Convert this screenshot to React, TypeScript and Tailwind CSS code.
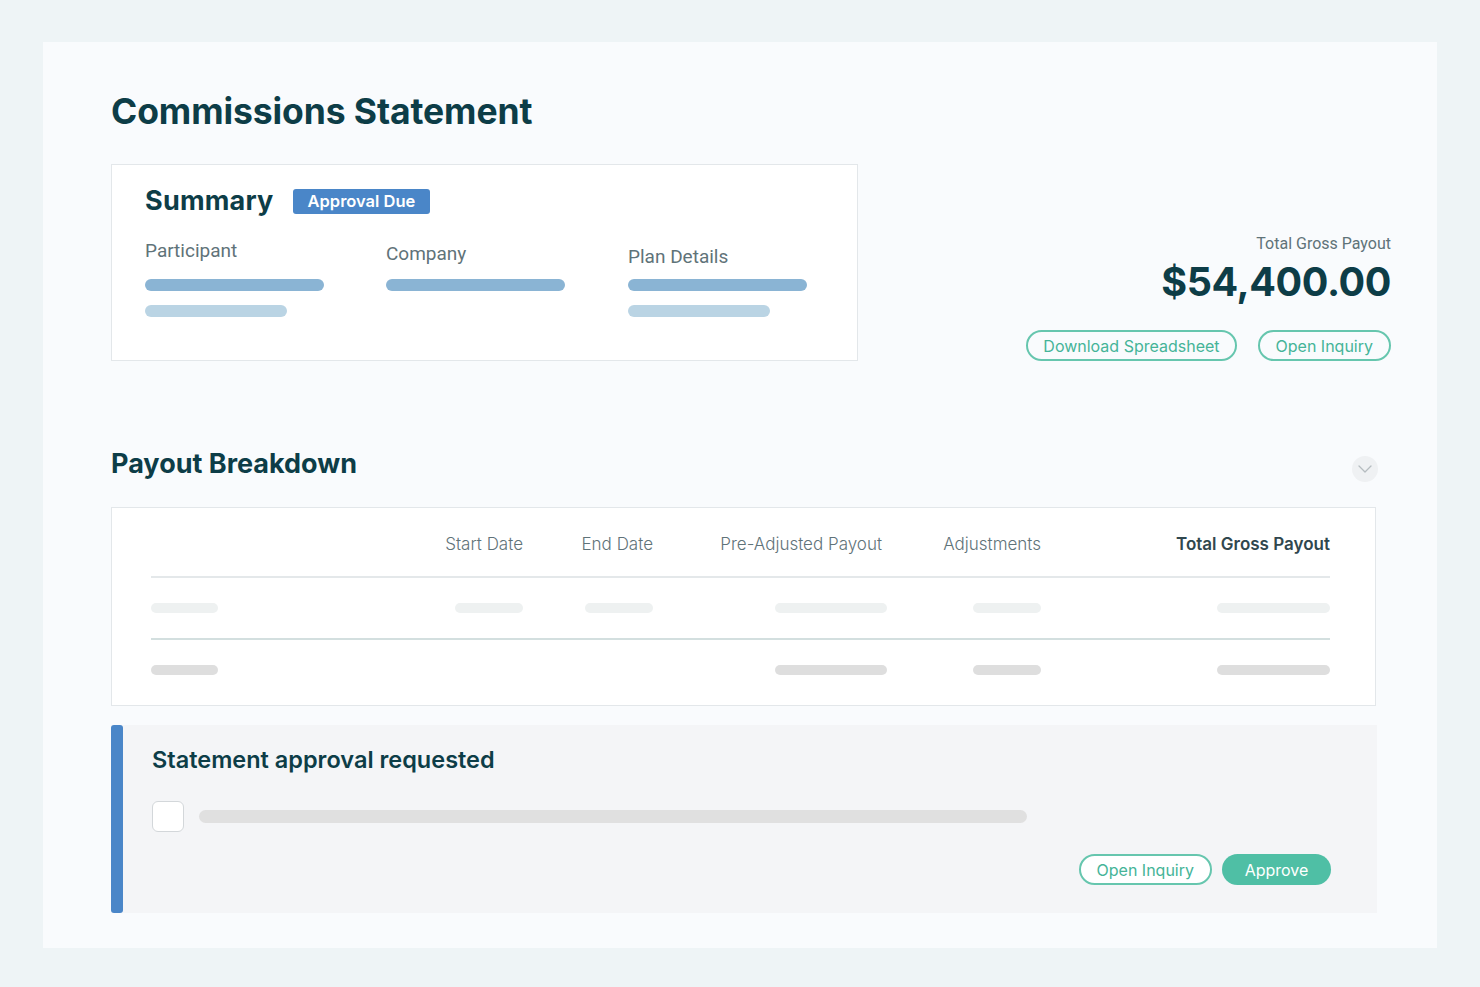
import React from "react";

const cols = "grid grid-cols-[232px_140px_130px_229px_159px_289px] items-center";

function Bar({ w, c }: { w: string; c: string }) {
  return <div className={`h-[10px] rounded-full ${w} ${c}`} />;
}

export default function App() {
  return (
    <div className="min-h-[987px] w-[1480px] bg-[#eef4f6] pt-[42px] font-['Inter',sans-serif]">
      <div className="ml-[43px] h-[906px] w-[1394px] bg-[#f9fbfd] pl-[68px] pr-[46px]">
        {/* Title */}
        <div className="pt-[48px] h-[122px]">
          <h1 className="text-[35.5px] leading-[44px] font-bold tracking-[-0.1px] text-[#0d3d47]">
            Commissions Statement
          </h1>
        </div>

        {/* Summary row */}
        <div className="flex items-end">
          <div className="h-[197px] w-[747px] border border-[#e3e7ea] bg-white pl-[33px] pt-[21px]">
            <div className="flex items-center gap-[19px]">
              <span className="text-[27px] leading-[30px] font-bold text-[#0d3d47] tracking-[0.2px]">Summary</span>
              <span className="rounded-[3px] bg-[#4a86c8] px-[15px] h-[25px] flex items-center text-[16.5px] font-semibold text-white">
                Approval Due
              </span>
            </div>
            <div className="mt-[22px] flex font-['Roboto',sans-serif] text-[19px] text-[#5f7379]">
              <div className="w-[241px]">
                <div className="h-[26px] leading-[26px]">Participant</div>
                <div className="mt-[15px] h-[12px] w-[179px] rounded-full bg-[#8ab4d4]" />
                <div className="mt-[14px] h-[12px] w-[142px] rounded-full bg-[#bad4e4]" />
              </div>
              <div className="w-[242px]">
                <div className="h-[26px] leading-[26px] pt-[3px]">Company</div>
                <div className="mt-[15px] h-[12px] w-[179px] rounded-full bg-[#8ab4d4]" />
              </div>
              <div>
                <div className="h-[26px] leading-[26px] pt-[6px]">Plan Details</div>
                <div className="mt-[15px] h-[12px] w-[179px] rounded-full bg-[#8ab4d4]" />
                <div className="mt-[14px] h-[12px] w-[142px] rounded-full bg-[#bad4e4]" />
              </div>
            </div>
          </div>
          <div className="flex flex-1 flex-col items-end">
            <div className="font-['Roboto',sans-serif] text-[16px] leading-[20px] text-[#5f7379]">Total Gross Payout</div>
            <div className="mt-[4px] text-[39.5px] leading-[48px] font-bold tracking-[-0.4px] text-[#0d3d47]">$54,400.00</div>
            <div className="mt-[24px] flex gap-[21px]">
              <button className="h-[31px] rounded-full border-2 border-[#66c6ae] px-[15px] text-[16px] text-[#45b498]">
                Download Spreadsheet
              </button>
              <button className="h-[31px] rounded-full border-2 border-[#66c6ae] px-[16px] text-[16px] text-[#45b498]">
                Open Inquiry
              </button>
            </div>
          </div>
        </div>

        {/* Payout Breakdown */}
        <div className="mr-[14px] mt-[85px] flex items-center justify-between">
          <h2 className="text-[27px] leading-[34px] font-bold text-[#0d3d47]">Payout Breakdown</h2>
          <div className="mr-[-1px] mt-[10px] flex h-[26px] w-[26px] items-center justify-center rounded-full bg-[#eff1f3]">
            <svg width="14" height="8" viewBox="0 0 14 8" fill="none">
              <path d="M1 1l6 6 6-6" stroke="#b5bcc0" strokeWidth="1.3" strokeLinecap="round" strokeLinejoin="round" />
            </svg>
          </div>
        </div>

        <div className="mr-[15px] mt-[25px] h-[199px] border border-[#e3e7ea] bg-white pl-[39px] pr-[45px] pt-[24px]">
          <div className={`${cols} h-[24px] text-[17px] font-light text-[#5f7379]`}>
            <div />
            <div className="text-right">Start Date</div>
            <div className="text-right">End Date</div>
            <div className="text-right">Pre-Adjusted Payout</div>
            <div className="text-right">Adjustments</div>
            <div className="text-right font-semibold text-[#30474e]">Total Gross Payout</div>
          </div>
          <div className="mt-[20px] h-[2px] bg-[#e4e8ea]" />
          <div className={`${cols} h-[60px]`}>
            <Bar w="w-[67px]" c="bg-[#eef1f1]" />
            <div className="flex justify-end"><Bar w="w-[68px]" c="bg-[#eef1f1]" /></div>
            <div className="flex justify-end"><Bar w="w-[68px]" c="bg-[#eef1f1]" /></div>
            <div className="flex justify-end mr-[-5px]"><Bar w="w-[112px]" c="bg-[#eef1f1]" /></div>
            <div className="flex justify-end"><Bar w="w-[68px]" c="bg-[#eef1f1]" /></div>
            <div className="flex justify-end"><Bar w="w-[113px]" c="bg-[#eef1f1]" /></div>
          </div>
          <div className="h-[2px] bg-[#d3dfdf]" />
          <div className={`${cols} h-[60px]`}>
            <Bar w="w-[67px]" c="bg-[#dedede]" />
            <div />
            <div />
            <div className="flex justify-end mr-[-5px]"><Bar w="w-[112px]" c="bg-[#dedede]" /></div>
            <div className="flex justify-end"><Bar w="w-[68px]" c="bg-[#dedede]" /></div>
            <div className="flex justify-end"><Bar w="w-[113px]" c="bg-[#dedede]" /></div>
          </div>
        </div>

        {/* Approval panel */}
        <div className="mr-[14px] mt-[19px] flex h-[188px] bg-[#f4f5f7]">
          <div className="w-[12px] rounded-[3px] bg-[#4a86c8]" />
          <div className="flex-1 pl-[29px] pr-[46px] pt-[20px]">
            <div className="text-[23.5px] leading-[30px] font-semibold text-[#0d3d47]">Statement approval requested</div>
            <div className="mt-[26px] flex items-center gap-[15px]">
              <div className="h-[31px] w-[32px] rounded-[6px] border border-[#d3d7da] bg-white" />
              <div className="h-[13px] w-[828px] rounded-full bg-[#e0e0e0]" />
            </div>
            <div className="mt-[22px] flex justify-end gap-[10px]">
              <button className="h-[31px] rounded-full border-2 border-[#66c6ae] bg-white px-[16px] text-[16px] text-[#45b498]">
                Open Inquiry
              </button>
              <button className="h-[31px] w-[109px] rounded-full bg-[#4fbfa5] text-[16px] text-white">
                Approve
              </button>
            </div>
          </div>
        </div>
      </div>
    </div>
  );
}
